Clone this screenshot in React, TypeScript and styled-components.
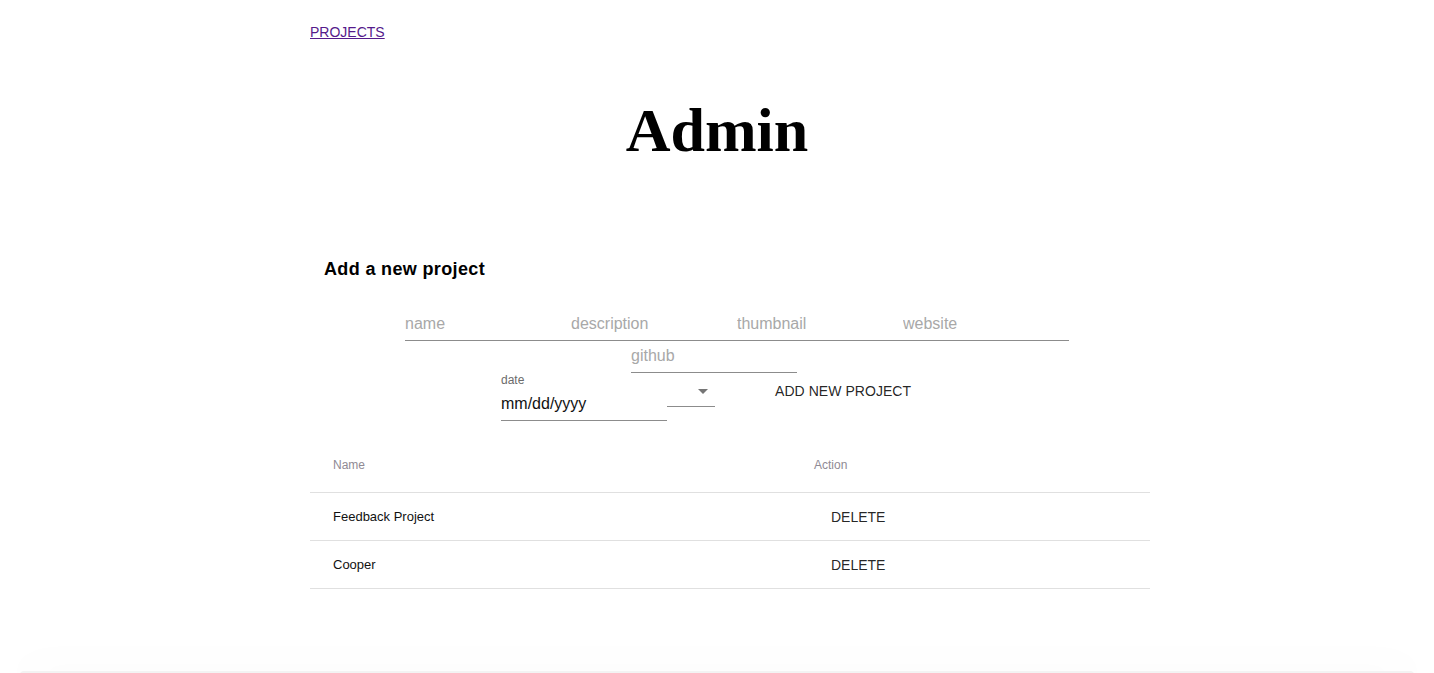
import React from "react";
import styled, { createGlobalStyle } from "styled-components";

const Global = createGlobalStyle`
  html, body { margin: 0; padding: 0; background: #fff; }
  body { font-family: "Liberation Sans", Arial, sans-serif; color: rgba(0,0,0,0.87); }
  * { box-sizing: border-box; }
`;

const Page = styled.div`
  display: flex;
  flex-direction: column;
  min-height: 673px;
`;

const Container = styled.div`
  width: 840px;
  margin-left: calc(50% - 407px);
`;

const Nav = styled.nav`
  padding-top: 23px;
  height: 40px;
`;

const NavLink = styled.a`
  font-size: 14px;
  line-height: 16px;
  color: #551a8b;
  text-decoration: underline;
  cursor: pointer;
`;

const Title = styled.h1`
  margin: 54px 0 0;
  text-align: center;
  font-family: "Liberation Serif", "Times New Roman", serif;
  font-weight: bold;
  font-size: 62px;
  line-height: 72px;
  color: #000;
`;

const Heading = styled.h2`
  margin: 92px 0 0;
  padding-left: 14px;
  font-size: 18px;
  line-height: 22px;
  font-weight: bold;
  letter-spacing: 0.35px;
  color: #000;
`;

const FieldRow = styled.div<{ $indent: number; $top?: number }>`
  display: flex;
  align-items: flex-start;
  padding-left: ${(p) => p.$indent}px;
  margin-top: ${(p) => p.$top ?? 0}px;
`;

const TextInput = styled.input`
  width: 166px;
  height: 28px;
  padding: 1px 0 6px;
  margin: 0;
  border: none;
  border-bottom: 1px solid #8c8c8c;
  outline: none;
  background: transparent;
  font-family: "Liberation Sans", Arial, sans-serif;
  font-size: 16px;
  line-height: 20px;
  color: rgba(0,0,0,0.87);
  &::placeholder { color: #a8a8a8; }
`;

const DateField = styled.div`
  width: 166px;
  display: flex;
  flex-direction: column;
`;

const DateLabel = styled.span`
  font-size: 12px;
  line-height: 14px;
  color: #6b6b6b;
`;

const DateValue = styled.div`
  margin-top: 7px;
  padding-bottom: 6px;
  border-bottom: 1px solid #8c8c8c;
  font-size: 16px;
  line-height: 20px;
  color: #111;
`;

const Select = styled.div`
  width: 48px;
  height: 23px;
  margin-top: 11px;
  display: flex;
  justify-content: flex-end;
  padding: 5px 7px 0 0;
  border-bottom: 1px solid #8c8c8c;
`;

const Arrow = styled.span`
  width: 0;
  height: 0;
  border-left: 5px solid transparent;
  border-right: 5px solid transparent;
  border-top: 5px solid #757575;
`;

const FlatButton = styled.button`
  margin: 9px 0 0 44px;
  padding: 0 16px;
  border: none;
  background: transparent;
  font-family: "Liberation Sans", Arial, sans-serif;
  font-size: 14px;
  line-height: 18px;
  letter-spacing: 0.05px;
  text-transform: uppercase;
  color: rgba(0,0,0,0.87);
  cursor: pointer;
`;

const Table = styled.div`
  margin-top: 16px;
  display: flex;
  flex-direction: column;
`;

const Row = styled.div<{ $head?: boolean }>`
  display: grid;
  grid-template-columns: 481px 1fr;
  align-items: center;
  height: ${(p) => (p.$head ? 56 : 48)}px;
  border-bottom: 1px solid #e0e0e0;
  font-size: ${(p) => (p.$head ? 12 : 13)}px;
  color: ${(p) => (p.$head ? "#8f8a94" : "#111")};
`;

const Cell = styled.div`
  padding: 0 23px;
`;

const DeleteButton = styled.button`
  padding: 0 17px;
  border: none;
  background: transparent;
  font-family: "Liberation Sans", Arial, sans-serif;
  font-size: 14px;
  line-height: 18px;
  color: rgba(0,0,0,0.87);
  cursor: pointer;
`;

const Footer = styled.div`
  margin: 82px 20px 0;
  height: 4px;
  border-radius: 6px 6px 0 0;
  background: #f3f3f3;
  box-shadow: 0 0 40px rgba(0,0,0,0.1);
`;

const projects = ["Feedback Project", "Cooper"];

export default function App() {
  return (
    <Page>
      <Global />
      <Container>
        <Nav>
          <NavLink>PROJECTS</NavLink>
        </Nav>
      </Container>
      <Title>Admin</Title>
      <Container>
        <Heading>Add a new project</Heading>
        <FieldRow $indent={95} $top={33}>
          <TextInput placeholder="name" />
          <TextInput placeholder="description" />
          <TextInput placeholder="thumbnail" />
          <TextInput placeholder="website" />
        </FieldRow>
        <FieldRow $indent={321} $top={4}>
          <TextInput placeholder="github" />
        </FieldRow>
        <FieldRow $indent={191}>
          <DateField>
            <DateLabel>date</DateLabel>
            <DateValue>mm/dd/yyyy</DateValue>
          </DateField>
          <Select>
            <Arrow />
          </Select>
          <FlatButton>Add new project</FlatButton>
        </FieldRow>
        <Table>
          <Row $head>
            <Cell>Name</Cell>
            <Cell>Action</Cell>
          </Row>
          {projects.map((p) => (
            <Row key={p}>
              <Cell>{p}</Cell>
              <Cell>
                <DeleteButton>DELETE</DeleteButton>
              </Cell>
            </Row>
          ))}
        </Table>
      </Container>
      <Footer />
    </Page>
  );
}
